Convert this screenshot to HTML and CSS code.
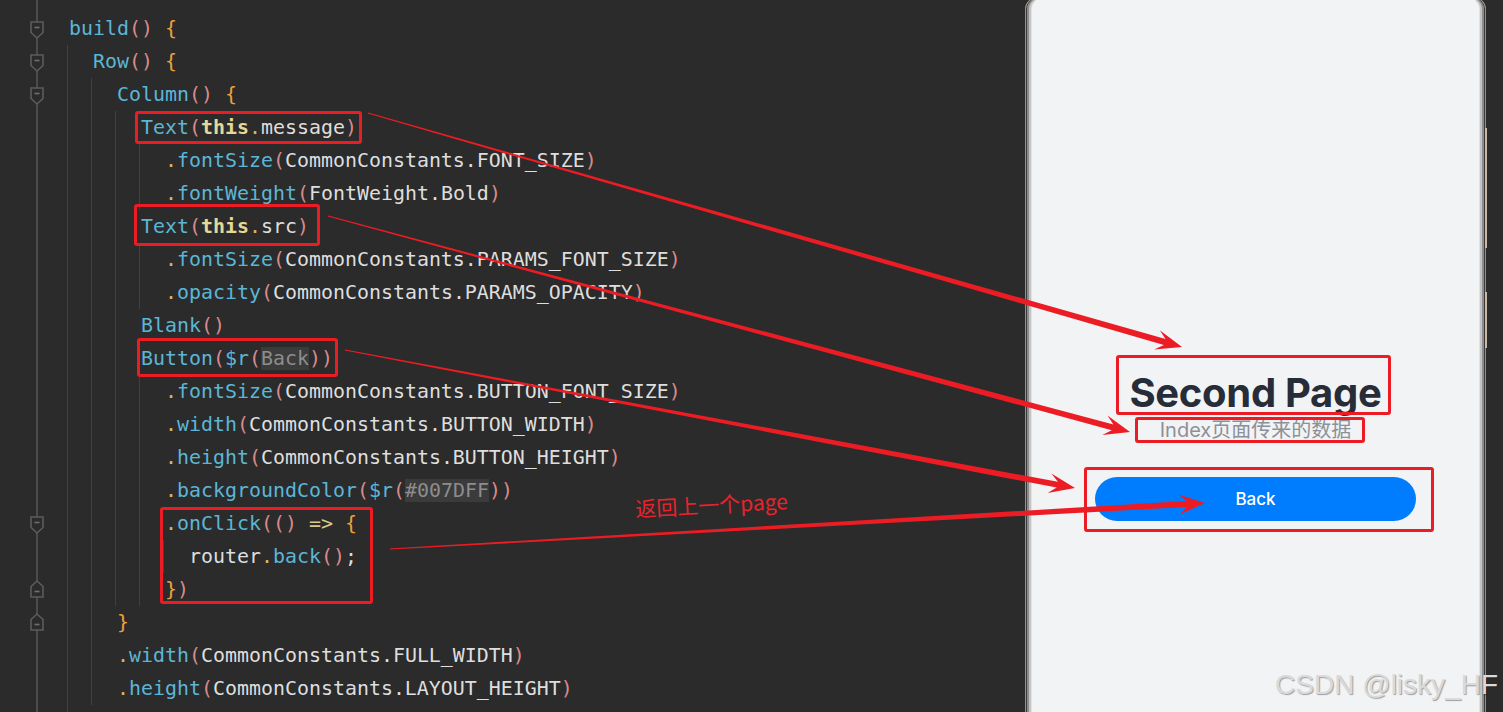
FILE: index.html
```html
<!DOCTYPE html>
<html>
<head>
  <link rel="stylesheet" href="styles.css">
</head>
<body>
  <div class="app">
    <div class="editor">
      <div class="line"><span class="gut"><svg class="fold" viewBox="0 0 16 20"><path class="fold-shape" d="M2 2H14V12.5L8 18L2 12.5Z"/><path class="fold-minus" d="M5.5 7.5H10.5"/></svg></span><span class="code l2"><span class="fn">build</span><span class="p">()</span> <span class="b">{</span></span></div>
      <div class="line"><span class="gut"><svg class="fold" viewBox="0 0 16 20"><path class="fold-shape" d="M2 2H14V12.5L8 18L2 12.5Z"/><path class="fold-minus" d="M5.5 7.5H10.5"/></svg></span><span class="code l4"><span class="fn">Row</span><span class="p">()</span> <span class="b">{</span></span></div>
      <div class="line"><span class="gut"><svg class="fold" viewBox="0 0 16 20"><path class="fold-shape" d="M2 2H14V12.5L8 18L2 12.5Z"/><path class="fold-minus" d="M5.5 7.5H10.5"/></svg></span><span class="code l6"><span class="fn">Column</span><span class="p">()</span> <span class="b">{</span></span></div>
      <div class="line"><span class="gut"></span><span class="code l8"><span class="fn">Text</span><span class="p">(</span><span class="kw">this</span><span class="dot">.</span>message<span class="p">)</span></span></div>
      <div class="line"><span class="gut"></span><span class="code l10"><span class="dot">.</span><span class="fn">fontSize</span><span class="p">(</span>CommonConstants.FONT_SIZE<span class="p">)</span></span></div>
      <div class="line"><span class="gut"></span><span class="code l10"><span class="dot">.</span><span class="fn">fontWeight</span><span class="p">(</span>FontWeight.Bold<span class="p">)</span></span></div>
      <div class="line"><span class="gut"></span><span class="code l8"><span class="fn">Text</span><span class="p">(</span><span class="kw">this</span><span class="dot">.</span>src<span class="p">)</span></span></div>
      <div class="line"><span class="gut"></span><span class="code l10"><span class="dot">.</span><span class="fn">fontSize</span><span class="p">(</span>CommonConstants.PARAMS_FONT_SIZE<span class="p">)</span></span></div>
      <div class="line"><span class="gut"></span><span class="code l10"><span class="dot">.</span><span class="fn">opacity</span><span class="p">(</span>CommonConstants.PARAMS_OPACITY<span class="p">)</span></span></div>
      <div class="line"><span class="gut"></span><span class="code l8"><span class="fn">Blank</span><span class="p">()</span></span></div>
      <div class="line"><span class="gut"></span><span class="code l8"><span class="fn">Button</span><span class="p">(</span><span class="fn">$r</span><span class="p">(</span><span class="res">Back</span><span class="p">))</span></span></div>
      <div class="line"><span class="gut"></span><span class="code l10"><span class="dot">.</span><span class="fn">fontSize</span><span class="p">(</span>CommonConstants.BUTTON_FONT_SIZE<span class="p">)</span></span></div>
      <div class="line"><span class="gut"></span><span class="code l10"><span class="dot">.</span><span class="fn">width</span><span class="p">(</span>CommonConstants.BUTTON_WIDTH<span class="p">)</span></span></div>
      <div class="line"><span class="gut"></span><span class="code l10"><span class="dot">.</span><span class="fn">height</span><span class="p">(</span>CommonConstants.BUTTON_HEIGHT<span class="p">)</span></span></div>
      <div class="line"><span class="gut"></span><span class="code l10"><span class="dot">.</span><span class="fn">backgroundColor</span><span class="p">(</span><span class="fn">$r</span><span class="p">(</span><span class="res">#007DFF</span><span class="p">))</span></span></div>
      <div class="line"><span class="gut"><svg class="fold" viewBox="0 0 16 20"><path class="fold-shape" d="M2 2H14V12.5L8 18L2 12.5Z"/><path class="fold-minus" d="M5.5 7.5H10.5"/></svg></span><span class="code l10"><span class="dot">.</span><span class="fn">onClick</span><span class="p">(()</span> <span class="op">=&gt;</span> <span class="b">{</span></span></div>
      <div class="line"><span class="gut"></span><span class="code l12">router<span class="dot">.</span><span class="fn">back</span><span class="p">()</span>;</span></div>
      <div class="line"><span class="gut"><svg class="fold fold-up" viewBox="0 0 16 20"><path class="fold-shape" d="M2 18H14V7.5L8 2L2 7.5Z"/><path class="fold-minus" d="M5.5 12.5H10.5"/></svg></span><span class="code l10"><span class="b">}</span><span class="p">)</span></span></div>
      <div class="line"><span class="gut"><svg class="fold fold-up" viewBox="0 0 16 20"><path class="fold-shape" d="M2 18H14V7.5L8 2L2 7.5Z"/><path class="fold-minus" d="M5.5 12.5H10.5"/></svg></span><span class="code l6"><span class="b">}</span></span></div>
      <div class="line"><span class="gut"></span><span class="code l6"><span class="dot">.</span><span class="fn">width</span><span class="p">(</span>CommonConstants.FULL_WIDTH<span class="p">)</span></span></div>
      <div class="line"><span class="gut"></span><span class="code l6"><span class="dot">.</span><span class="fn">height</span><span class="p">(</span>CommonConstants.LAYOUT_HEIGHT<span class="p">)</span></span></div>
      <div class="line"><span class="gut"></span><span class="code l4"><span class="b">}</span></span></div>
    </div>

    <div class="device">
      <div class="phone">
        <div class="page-title">Second Page</div>
        <div class="page-params">Index页面传来的数据</div>
        <div class="back-btn">Back</div>
      </div>
      <div class="key key-1"></div>
      <div class="key key-2"></div>
    </div>

    <!-- annotations drawn on top of the screenshot -->
    <div class="overlay">
      <div class="mark mark-message"></div>
      <div class="mark mark-src"></div>
      <div class="mark mark-button"></div>
      <div class="mark mark-click"></div>
      <div class="mark mark-title"></div>
      <div class="mark mark-params"></div>
      <div class="mark mark-back"></div>
      <svg class="arrows" width="1503" height="712" viewBox="0 0 1503 712">
        <polygon points="367.8,113.6 1163.9,344.9 1154.2,349.4 1182,347 1159.8,330.2 1165.5,339.1 368.2,112.4"/>
        <polygon points="327.8,216.6 1111.8,430.2 1102.3,434.9 1130,432 1107.5,415.5 1113.4,424.4 328.2,215.4"/>
        <polygon points="344.9,350.6 1056.7,487.6 1047.6,493 1075,488 1051.4,473.4 1057.9,481.8 345.1,349.4"/>
        <polygon points="390,549.6 1187.2,507 1179.6,514.5 1205,503 1178.4,494.5 1186.8,501 390,548.4"/>
      </svg>
      <div class="note">返回上一个page</div>
    </div>

    <div class="watermark">CSDN @lisky_HF</div>
  </div>
</body>
</html>
```

FILE: styles.css
```css
:root {
  --editor-bg: #2b2b2b;
  --code-fn: #5bb6d6;
  --code-paren: #d98a8c;
  --code-brace: #eea23c;
  --code-kw: #e4d897;
  --code-dot: #d9b560;
  --code-text: #dedede;
  --guide: #404040;
  --mark-red: #ec1c24;
  --screen-bg: #f1f3f5;
  --brand-blue: #007dff;
}

* {
  box-sizing: border-box;
}

body {
  margin: 0;
  width: 1503px;
  height: 712px;
  overflow: hidden;
  background: var(--editor-bg);
}

.app {
  position: relative;
  display: flex;
  height: 712px;
  overflow: hidden;
}

/* code editor */
.editor {
  width: 1025px;
  flex: none;
  padding-top: 11.5px;
  background: linear-gradient(#4b4b4b, #4b4b4b) 36px 0 / 2px 100% no-repeat, var(--editor-bg);
  font-family: "DejaVu Sans Mono", monospace;
  font-size: 19.93px;
  color: var(--code-text);
}

.line {
  display: flex;
  height: 33.05px;
  line-height: 33.05px;
  white-space: nowrap;
}

.gut {
  width: 45px;
  flex: none;
  display: flex;
  align-items: center;
  padding-left: 29px;
}

.fold {
  width: 16px;
  height: 20px;
  margin-top: 3px;
}

.fold-up {
  margin-top: -2px;
}

.fold-shape {
  fill: var(--editor-bg);
  stroke: #5c5c5c;
  stroke-width: 1.6;
}

.fold-minus {
  stroke: #707070;
  stroke-width: 1.6;
}

.code {
  flex: 1;
  background-image: repeating-linear-gradient(90deg, transparent 0 22px, var(--guide) 22px 23px, transparent 23px 24px);
  background-repeat: no-repeat;
  background-size: 0 100%;
}

.l2 { padding-left: 24px; }
.l4 { padding-left: 48px; background-size: 24px 100%; }
.l6 { padding-left: 72px; background-size: 48px 100%; }
.l8 { padding-left: 96px; background-size: 72px 100%; }
.l10 { padding-left: 120px; background-size: 96px 100%; }
.l12 { padding-left: 144px; background-size: 120px 100%; }

.fn { color: var(--code-fn); }
.p { color: var(--code-paren); }
.b { color: var(--code-brace); }
.dot { color: var(--code-dot); }
.op { color: #d8c98e; }

.kw {
  color: var(--code-kw);
  font-weight: bold;
}

.res {
  color: #8d8d8d;
  background: #3b3b3b;
}

/* device preview */
.device {
  position: relative;
  flex: 1;
  padding-right: 17px;
}

.phone {
  height: 760px;
  margin-top: -3px;
  border: 1px solid #a38b74;
  border-radius: 12px;
  background: var(--screen-bg);
  box-shadow: inset 1px 0 0 #3a3a3a, inset 3px 0 0 #8c8c8c, inset 5px 0 0 #c4c4c4, inset 6px 0 0 #e2e2e2,
    inset -1px 0 0 #3a3a3a, inset -3px 0 0 #8c8c8c, inset -5px 0 0 #c4c4c4, inset -6px 0 0 #e2e2e2;
  display: flex;
  flex-direction: column;
  align-items: center;
  padding-top: 371px;
}

.page-title {
  font-family: Inter, "Noto Sans", sans-serif;
  font-size: 40px;
  font-weight: 700;
  line-height: 48px;
  color: #272d38;
  letter-spacing: -0.3px;
}

.page-params {
  font-family: Inter, "Noto Sans CJK SC", sans-serif;
  font-size: 20px;
  line-height: 26px;
  color: #8c9098;
}

.back-btn {
  margin-top: 34px;
  width: 321px;
  height: 44px;
  border-radius: 22px;
  background: var(--brand-blue);
  color: white;
  font-family: Inter, sans-serif;
  font-size: 17px;
  font-weight: 500;
  display: flex;
  align-items: center;
  justify-content: center;
}

.key {
  position: absolute;
  right: 16px;
  width: 3px;
  background: #cbb9a5;
  border-left: 1px solid #3a3a3a;
}

.key-1 {
  top: 128px;
  height: 120px;
}

.key-2 {
  top: 292px;
  height: 56px;
}

/* red annotations */
.overlay {
  position: absolute;
  inset: 0;
  pointer-events: none;
}

.mark {
  position: absolute;
  border: 3px solid var(--mark-red);
  border-radius: 3px;
}

.mark-message { left: 135px; top: 111px; width: 227px; height: 33px; }
.mark-src { left: 134px; top: 204px; width: 186px; height: 42px; }
.mark-button { left: 137px; top: 338px; width: 201px; height: 39px; }
.mark-click { left: 160px; top: 507px; width: 213px; height: 97px; }
.mark-title { left: 1116px; top: 355px; width: 275px; height: 60px; }
.mark-params { left: 1135px; top: 417px; width: 230px; height: 26px; }
.mark-back { left: 1084px; top: 467px; width: 350px; height: 65px; }

.arrows {
  position: absolute;
  left: 0;
  top: 0;
}

.arrows polygon {
  fill: var(--mark-red);
}

.note {
  position: absolute;
  left: 636px;
  top: 494px;
  font-family: "Noto Sans CJK SC", sans-serif;
  font-size: 21px;
  line-height: 28px;
  color: #e8232b;
  transform: rotate(-3deg);
  transform-origin: left bottom;
}

.watermark {
  position: absolute;
  right: 5px;
  top: 668px;
  font-family: "Liberation Sans", Arial, sans-serif;
  font-size: 28px;
  line-height: 34px;
  color: #dadada;
  text-shadow: 1px 1px 1px rgba(0, 0, 0, 0.35);
  pointer-events: none;
}
```
